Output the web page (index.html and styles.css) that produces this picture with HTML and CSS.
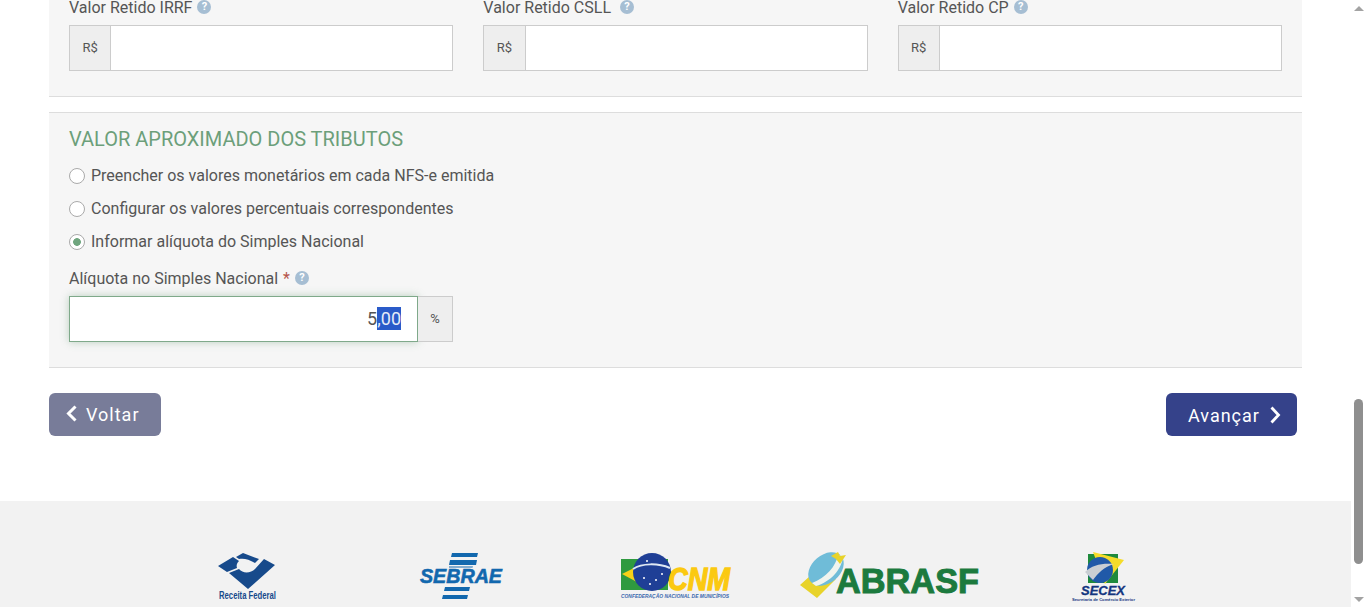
FILE: index.html
```html
<!DOCTYPE html>
<html>
<head>
    <title>NFS-e</title>
    <link rel="stylesheet" href="styles.css">
</head>
<body>
<div class="window">
    <div class="page">
        <div class="content">
            <div class="panel panel-top">
                <div class="columns">
                    <div class="field">
                        <div class="field-label">Valor Retido IRRF <span class="help">?</span></div>
                        <div class="input-group"><span class="addon addon-left">R$</span><div class="input"></div></div>
                    </div>
                    <div class="field">
                        <div class="field-label">Valor Retido CSLL <span class="help help-wide">?</span></div>
                        <div class="input-group"><span class="addon addon-left">R$</span><div class="input"></div></div>
                    </div>
                    <div class="field">
                        <div class="field-label">Valor Retido CP <span class="help">?</span></div>
                        <div class="input-group"><span class="addon addon-left">R$</span><div class="input"></div></div>
                    </div>
                </div>
            </div>

            <div class="panel panel-tributos">
                <h3 class="panel-title">VALOR APROXIMADO DOS TRIBUTOS</h3>
                <div class="radio-row"><span class="radio"></span>Preencher os valores monetários em cada NFS-e emitida</div>
                <div class="radio-row"><span class="radio"></span>Configurar os valores percentuais correspondentes</div>
                <div class="radio-row"><span class="radio radio-on"></span>Informar alíquota do Simples Nacional</div>
                <div class="field field-aliquota">
                    <div class="field-label">Alíquota no Simples Nacional <span class="required">*</span> <span class="help">?</span></div>
                    <div class="input-group">
                        <div class="input input-focus">5<span class="selected">,00</span></div>
                        <span class="addon addon-right">%</span>
                    </div>
                </div>
            </div>

            <div class="actions">
                <a class="btn btn-back">
                    <svg width="11" height="18" viewBox="0 0 11 18"><path d="M9.500 1.500 2.500 8.500l7 7" fill="none" stroke="#fff" stroke-width="3"/></svg>
                    Voltar
                </a>
                <a class="btn btn-next">
                    Avançar
                    <svg width="11" height="18" viewBox="0 0 11 18"><path d="M1.500 1.500 8.500 9l-7 7.500" fill="none" stroke="#fff" stroke-width="2.800"/></svg>
                </a>
            </div>
        </div>

        <div class="footer">
            <svg class="logo logo-receita" width="58" height="50" viewBox="0 0 58 50">
                <path d="M25 1 41 7 37 11C31 7 25 6 21 7L18 5Z" fill="#174a8b"/>
                <path d="M0 14 15 5 21 9C19 11 18 13 19 16L9 20Z" fill="#174a8b"/>
                <path d="M11 21 21 17C25 22 33 21 37 17L46 7 57 13 30 37Z" fill="#174a8b"/>
                <text x="1" y="47" class="logo-receita-text" textLength="57" lengthAdjust="spacingAndGlyphs">Receita Federal</text>
            </svg>
            <svg class="logo logo-sebrae" width="82" height="48" viewBox="0 0 82 48">
                <path d="M32 1H58L57 5H31ZM30 8H57L56 13H29ZM29 14.500H53L52.500 15.500H29ZM25 35H50L49 39H24ZM23 43H48L47 47H22Z" fill="#1268ae"/>
                <text x="0" y="31" class="logo-sebrae-text" textLength="82" lengthAdjust="spacingAndGlyphs">SEBRAE</text>
            </svg>
            <svg class="logo logo-cnm" width="110" height="48" viewBox="0 0 110 48">
                <rect x="1" y="7" width="47" height="31" fill="#2f9a3f"/>
                <path d="M2 22 30 8 56 22 30 37Z" fill="#f7d117"/>
                <circle cx="32" cy="20" r="19" fill="#1f3f96"/>
                <path d="M13 17C22 11 38 11 50 16" fill="none" stroke="#dfe8f4" stroke-width="2"/>
                <circle cx="24" cy="26" r="1" fill="#fff"/><circle cx="36" cy="28" r="1" fill="#fff"/><circle cx="42" cy="22" r="1" fill="#fff"/><circle cx="30" cy="32" r="1" fill="#fff"/><circle cx="27" cy="9" r="1" fill="#fff"/>
                <text x="48" y="38" class="logo-cnm-text" textLength="62" lengthAdjust="spacingAndGlyphs">CNM</text>
                <text x="1" y="46" class="logo-cnm-small" textLength="108" lengthAdjust="spacingAndGlyphs">CONFEDERAÇÃO NACIONAL DE MUNICÍPIOS</text>
            </svg>
            <svg class="logo logo-abrasf" width="180" height="48" viewBox="0 0 180 48">
                <path d="M0 33 10 24 14 32 36 27 17 46Z" fill="#e8d32a"/>
                <ellipse cx="26" cy="17" rx="20" ry="14" transform="rotate(-40 26 17)" fill="#6fbcd8"/>
                <path d="M38 3C36 14 26 26 12 31L16 34C30 30 42 18 43 4Z" fill="#f0f4ee"/>
                <path d="M31 4 38 0 40 4 46 3 40 12 36 7Z" fill="#e8d32a"/>
                <text x="36" y="41" class="logo-abrasf-text" textLength="143" lengthAdjust="spacingAndGlyphs">ABRASF</text>
            </svg>
            <svg class="logo logo-secex" width="64" height="50" viewBox="0 0 64 50">
                <rect x="16" y="2" width="30" height="29" fill="#1e8a3c"/>
                <path d="M21 0 52 8 33 32Z" fill="#f5dc2a"/>
                <circle cx="28" cy="18" r="13" fill="#2059a8"/>
                <path d="M13 20C20 13 30 11 42 12 32 15 26 21 21 28Z" fill="#c9ced3"/>
                <text x="9" y="43" class="logo-secex-text" textLength="44" lengthAdjust="spacingAndGlyphs">SECEX</text>
                <text x="0" y="49" class="logo-secex-small" textLength="63" lengthAdjust="spacingAndGlyphs">Secretaria de Comércio Exterior</text>
            </svg>
        </div>
    </div>

    <div class="scrollbar">
        <span class="arrow arrow-up"></span>
        <div class="track"><div class="thumb"></div></div>
        <span class="arrow arrow-down"></span>
    </div>
</div>
</body>
</html>
```

FILE: styles.css
```css
html, body {
    margin: 0;
    height: 607px;
    overflow: hidden;
    background: #fff;
}

body {
    font-family: Roboto, "Liberation Sans", sans-serif;
    color: #555;
    font-size: 16px;
}

.window {
    display: flex;
    height: 607px;
    overflow: hidden;
}

.page {
    flex: 1;
    min-width: 0;
}

.content {
    padding: 0 49px;
}

.panel {
    background-color: #f6f6f6;
    padding: 0 20px;
    border-bottom: 1px solid #ddd;
}

.panel-top {
    height: 96px;
}

.panel-tributos {
    margin-top: 15px;
    border-top: 1px solid #ddd;
    height: 254px;
}

.columns {
    display: grid;
    grid-template-columns: repeat(3, 1fr);
    gap: 30px;
}

.field-label {
    height: 15px;
    line-height: 15px;
    margin-bottom: 10px;
    white-space: nowrap;
}

.help {
    display: inline-block;
    width: 14px;
    height: 14px;
    line-height: 14px;
    margin-left: 1px;
    border-radius: 50%;
    background-color: #a6bed3;
    color: #fff;
    font-size: 11px;
    font-weight: 700;
    text-align: center;
    vertical-align: top;
}

.help-wide {
    margin-left: 5px;
}

.required {
    margin-left: 1px;
    color: #b5544a;
}

.input-group {
    display: flex;
    height: 46px;
}

.addon {
    display: flex;
    align-items: center;
    justify-content: center;
    box-sizing: border-box;
    padding-bottom: 2px;
    background-color: #eee;
    border: 1px solid #ccc;
    font-size: 13px;
}

.addon-left {
    width: 42.200px;
}

.addon-right {
    width: 35px;
    border-left: none;
}

.input {
    flex: 1;
    box-sizing: border-box;
    background-color: #fff;
    border: 1px solid #ccc;
    border-left: none;
}

.input-focus {
    border: 1px solid #7fa98a;
    box-shadow: 0 0 8px rgba(110, 160, 125, 0.45);
    padding-right: 16px;
    text-align: right;
    font-size: 18px;
    line-height: 44px;
    color: #555;
}

.selected {
    background-color: #2a5bc9;
    color: #e6ecf8;
    padding: 1px 0;
}

.panel-title {
    margin: 0;
    padding-top: 15px;
    height: 31px;
    line-height: 22px;
    font-size: 20px;
    font-weight: 400;
    color: #6c9f7a;
}

.radio-row {
    display: flex;
    align-items: center;
    height: 33px;
    gap: 6px;
}

.radio {
    box-sizing: border-box;
    width: 16px;
    height: 16px;
    border: 1px solid #aaa;
    border-radius: 50%;
    background-color: #fff;
}

.radio-on {
    background: radial-gradient(circle, #6fa57e 0 3.500px, #fff 4.200px);
}

.field-aliquota {
    width: 384px;
    margin-top: 13px;
}

.actions {
    display: flex;
    justify-content: space-between;
    margin-top: 25px;
    padding-right: 5px;
}

.btn {
    display: flex;
    align-items: center;
    height: 43px;
    box-sizing: border-box;
    border-radius: 6px;
    color: #fff;
    font-size: 18px;
    letter-spacing: 1px;
}

.btn-back {
    gap: 9px;
    width: 112px;
    padding-left: 17px;
    padding-bottom: 1px;
    background-color: #787c99;
}

.btn-next {
    gap: 10px;
    width: 131px;
    padding-left: 22px;
    padding-top: 1px;
    background-color: #35428a;
}

.footer {
    display: flex;
    align-items: flex-start;
    box-sizing: border-box;
    margin-top: 65px;
    height: 106px;
    padding: 51px 0 0 218px;
    background-color: #f2f2f2;
}

.logo {
    flex: none;
    overflow: visible;
}

.logo-sebrae { margin-left: 144px; }
.logo-cnm { margin-left: 118px; }
.logo-abrasf { margin-left: 70px; }
.logo-secex { margin-left: 92px; }

.logo-receita-text {
    font: 700 10px "Liberation Sans", sans-serif;
    fill: #174a8b;
}

.logo-sebrae-text {
    font: italic 700 21px "Liberation Sans", sans-serif;
    fill: #1268ae;
    stroke: #1268ae;
    stroke-width: 0.600px;
}

.logo-cnm-text {
    font: italic 700 32px "Liberation Sans", sans-serif;
    fill: #fbc911;
    stroke: #fbc911;
    stroke-width: 1.400px;
}

.logo-cnm-small {
    font: italic 700 6px "Liberation Sans", sans-serif;
    fill: #3a68ad;
}

.logo-abrasf-text {
    font: 700 35px "Liberation Sans", sans-serif;
    fill: #1c7a3e;
    stroke: #1c7a3e;
    stroke-width: 1px;
}

.logo-secex-text {
    font: italic 700 13px "Liberation Sans", sans-serif;
    fill: #14357f;
    stroke: #14357f;
    stroke-width: 0.300px;
}

.logo-secex-small {
    font: 700 4px "Liberation Sans", sans-serif;
    fill: #14357f;
}

.scrollbar {
    flex: none;
    display: flex;
    flex-direction: column;
    align-items: center;
    width: 15px;
    background-color: #fff;
}

.arrow {
    flex: none;
    width: 0;
    height: 0;
    border-left: 5px solid transparent;
    border-right: 5px solid transparent;
}

.arrow-up {
    margin-top: 6px;
    border-bottom: 5px solid #a3a3a3;
}

.arrow-down {
    margin-bottom: 5px;
    border-top: 5px solid #a3a3a3;
}

.track {
    flex: 1;
    width: 100%;
    padding-top: 388px;
    box-sizing: border-box;
    display: flex;
    justify-content: center;
}

.thumb {
    width: 9px;
    height: 165px;
    border-radius: 5px;
    background-color: #8f8f8f;
}
```
